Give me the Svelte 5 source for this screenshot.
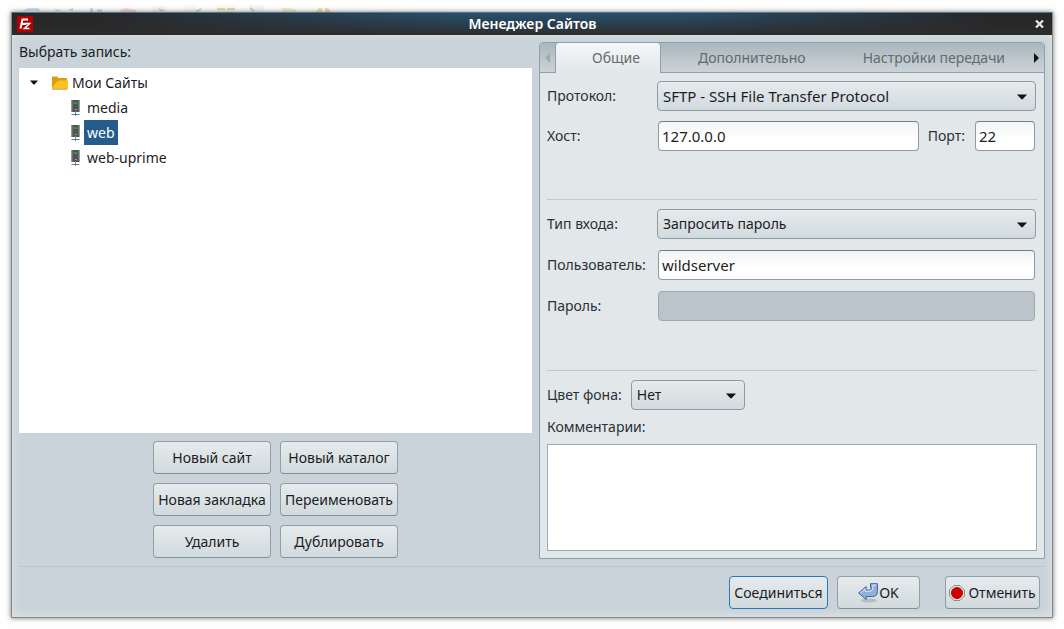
<script>
  const tabs = ['Общие', 'Дополнительно', 'Настройки передачи'];
  const sites = ['media', 'web', 'web-uprime'];
  const siteActions = ['Новый сайт', 'Новый каталог', 'Новая закладка', 'Переименовать', 'Удалить', 'Дублировать'];
  let activeTab = $state('Общие');
  let selected = $state('web');
  let host = $state('127.0.0.0');
  let port = $state('22');
  let user = $state('wildserver');
</script>

{#snippet arrow()}
  <svg class="caret" width="10" height="6" viewBox="0 0 10 6" aria-hidden="true"><path d="M0 0.5H10L5.6 5.2H4.4Z" fill="#111" /></svg>
{/snippet}

<div class="desktop">
  <svg class="behind" viewBox="0 0 340 12" width="340" height="12" aria-hidden="true">
    <path d="M24 10L28 8H38L41 11H22Z" fill="#a9cdf2" />
    <path d="M55 9L62 11H56ZM68 10L73 8V11Z" fill="#8fd08b" />
    <path d="M90 8H93V12H90ZM97 9H102V12H97Z" fill="#a9cdf2" />
    <path d="M120 10L126 8L136 10V12H121Z" fill="#f0c3c3" />
    <path d="M152 6H166V12H152Z" fill="#f2f2f2" /><path d="M158 8L166 11H160Z" fill="#e0a0a0" />
    <path d="M183 5H197V12H183Z" fill="#f6f6f6" /><path d="M195 11L201 8L202 9L198 12Z" fill="#96ce8a" />
    <path d="M217 5H235V12H217Z" fill="#f7f7f0" /><path d="M217 9H225M227 9H235" stroke="#d5c774" stroke-width="2" />
    <path d="M249 5H264V12H250Z" fill="#f2f2f2" /><path d="M250 8L254 11" stroke="#93c58c" stroke-width="2" />
    <path d="M281 8H291L296 10V12H283Z" fill="#f2e2b8" />
    <path d="M316 12L319 8H322V12ZM325 12V8H328L331 12Z" fill="#efcd70" />
  </svg>
  <main class="dialog">
    <header>
      <svg width="16" height="16" viewBox="0 0 16 16" aria-hidden="true">
        <rect width="16" height="16" fill="#b30000" />
        <path d="M3.5 12.5L5.5 3.5H11M4.5 8H9" fill="none" stroke="#fff" stroke-width="2" />
        <path d="M7.5 7.5H12.5L7.5 12.5H12.5" fill="none" stroke="#fff" stroke-width="1.6" />
      </svg>
      <h1>Менеджер Сайтов</h1>
      <button class="close" aria-label="Закрыть">
        <svg width="9" height="8" viewBox="0 0 9 8" aria-hidden="true"><path d="M1 0.5L8 7.5M8 0.5L1 7.5" stroke="#e4e4e4" stroke-width="2.3" /></svg>
      </button>
    </header>

    <div class="content">
      <div class="columns">
        <section class="left">
          <h2>Выбрать запись:</h2>
          <div class="tree" role="tree" aria-label="Сайты">
            <div class="row root" role="treeitem" aria-selected="false" aria-expanded="true">
              <svg width="8" height="5" viewBox="0 0 8 5" aria-hidden="true"><path d="M0 0.5H8L4.5 4.5H3.5Z" fill="#111" /></svg>
              <svg class="folder" width="16" height="14" viewBox="0 0 16 14" aria-hidden="true">
                <path d="M0 1Q0 0.5 0.5 0.5H5L6.5 2H14Q15 2 15 3V12H0Z" fill="#dc9f0c" />
                <path d="M0 13L1.5 9.5L5 5.8L7 4.5H16V12Q16 13 15 13Z" fill="#ffc21c" />
                <path d="M0 13.3H15.5" stroke="#ad8b39" stroke-width="0.7" />
              </svg>
              <span>Мои Сайты</span>
            </div>
            {#each sites as site}
              <div class="row site" role="treeitem" aria-selected={selected === site}>
                <svg width="9" height="16" viewBox="0 0 9 16" aria-hidden="true">
                  <rect x="0.5" y="0" width="8" height="12" fill="#505254" />
                  <path d="M1 0V12M8 0V12" stroke="#85878a" />
                  <rect x="2.5" y="2" width="4" height="2" fill="#22a235" />
                  <path d="M4 9.5H5.5" stroke="#b4b6b7" />
                  <path d="M4.5 11V16" stroke="#70879d" />
                  <path d="M0.5 14.5H8.5" stroke="#5c7a96" />
                </svg>
                <button class:selected={selected === site} onclick={() => (selected = site)}>{site}</button>
              </div>
            {/each}
          </div>
          <div class="site-actions">
            {#each siteActions as label}<button class="btn">{label}</button>{/each}
          </div>
        </section>

        <section class="notebook">
          <nav>
            <button class="scroll prev" aria-label="Назад" disabled>
              <svg width="5" height="10" viewBox="0 0 5 10" aria-hidden="true"><path d="M5 0V10L0 5Z" fill="#9dabb1" /></svg>
            </button>
            {#each tabs as tab}
              <button class="tab" class:active={activeTab === tab} onclick={() => (activeTab = tab)}>{tab}</button>
            {/each}
            <button class="scroll next" aria-label="Вперёд">
              <svg width="5" height="10" viewBox="0 0 5 10" aria-hidden="true"><path d="M0 0V10L5 5Z" fill="#111" /></svg>
            </button>
          </nav>
          <form class="page" onsubmit={(e) => e.preventDefault()}>
            <div class="group server">
              <label for="protocol">Протокол:</label>
              <div class="select latin">
                <select id="protocol"><option>SFTP - SSH File Transfer Protocol</option></select>{@render arrow()}
              </div>
              <label for="host">Хост:</label>
              <div class="host">
                <input id="host" bind:value={host} />
                <label for="port">Порт:</label>
                <input id="port" class="port" bind:value={port} />
              </div>
            </div>
            <hr />
            <div class="group login">
              <label for="logon">Тип входа:</label>
              <div class="select">
                <select id="logon"><option>Запросить пароль</option></select>{@render arrow()}
              </div>
              <label for="user">Пользователь:</label>
              <input id="user" bind:value={user} />
              <label for="password">Пароль:</label>
              <input id="password" type="password" disabled />
            </div>
            <hr />
            <div class="color">
              <label for="color">Цвет фона:</label>
              <div class="select">
                <select id="color"><option>Нет</option></select>{@render arrow()}
              </div>
            </div>
            <label class="comments-label" for="comments">Комментарии:</label>
            <textarea id="comments"></textarea>
          </form>
        </section>
      </div>

      <footer>
        <button class="btn connect">Соединиться</button>
        <button class="btn ok">
          <svg width="20" height="20" viewBox="0 0 20 20" aria-hidden="true">
            <ellipse cx="11" cy="17.5" rx="8" ry="2" fill="#a9b0b4" opacity="0.7" />
            <path d="M0.6 10L8.2 3.5V7H11.5Q13.5 7 13.5 5V4.5H12.5V0.7H19.4V8.5Q19.4 13.5 14.5 13.5H8.2V16.5Z" fill="#8fb2da" stroke="#3d659c" stroke-linejoin="round" />
            <path d="M2.3 10L7.2 5.8V8.2H12Q14.8 8 14.8 5V2H18.2" fill="none" stroke="#dbe8f6" />
          </svg>OK
        </button>
        <button class="btn cancel">
          <svg width="16" height="16" viewBox="0 0 16 16" aria-hidden="true">
            <path d="M5 0.6H11L15.4 5V11L11 15.4H5L0.6 11V5Z" fill="#eeeeec" stroke="#81837d" />
            <circle cx="8" cy="8" r="5.6" fill="#d00000" stroke="#a80000" stroke-width="0.8" />
          </svg>Отменить
        </button>
      </footer>
    </div>
  </main>
</div>

<style>
  :global(body) { margin: 0; background: #fefefe; }
  .desktop {
    box-sizing: border-box;
    min-height: 100vh;
    padding: 12px 11px 11px;
    display: flex;
    position: relative;
    font: 14px/20px "Noto Sans", sans-serif;
    color: #1b1d1f;
  }
  .behind { position: absolute; top: 0; left: 0; opacity: 0.6; }
  .dialog {
    position: relative;
    flex: 1;
    min-width: 0;
    display: flex;
    flex-direction: column;
    box-sizing: border-box;
    border: 1px solid #858789;
    border-top: 0;
    box-shadow: 0 0 5px rgba(0, 0, 0, 0.55);
    background: #cad3d9;
  }
  header {
    display: flex;
    align-items: center;
    height: 23px;
    padding: 0 8px 0 5px;
    border-top: 1px solid #5a7688;
    box-sizing: border-box;
    background: linear-gradient(rgba(46, 43, 42, 0) 0%, rgba(46, 43, 42, 0.95) 100%), linear-gradient(90deg, #252729 8%, #27506e 42%, #27506e 64%, #252729 94%);
  }
  h1 { flex: 1; margin: 0; padding-right: 3px; font-size: 14px; line-height: 20px; font-weight: 600; color: #fff; text-align: center; }
  button { font: inherit; color: inherit; margin: 0; padding: 0; border: 0; background: none; }
  .close { display: flex; padding: 0; }
  .content {
    flex: 1;
    display: flex;
    flex-direction: column;
    padding: 7px 7px 8px;
    box-shadow: inset 0 -1px 8px #dfe8e8;
  }
  .columns { flex: 1; display: grid; grid-template-columns: 513fr 506fr; gap: 7px; }
  .left { display: flex; flex-direction: column; min-width: 0; }
  h2 { margin: 0; font: inherit; line-height: 20px; height: 26px; }
  .tree { flex: 1; background: #fff; padding: 2px 11px; }
  .row { display: flex; align-items: center; height: 25px; }
  .root span { margin-left: 4px; }
  .folder { margin-left: 14px; }
  .site { padding-left: 41px; gap: 4px; }
  .site button { height: 25px; padding: 0 3px; }
  .site .selected { background: #255c8c; color: #fff; }
  .site-actions { display: grid; grid-template-columns: repeat(2, 118px); gap: 9px; justify-content: center; padding: 8px 0 1px; }
  .btn {
    display: flex;
    align-items: center;
    justify-content: center;
    box-sizing: border-box;
    height: 33px;
    border: 1px solid #8fa0a6;
    border-bottom-color: #7f9096;
    border-radius: 4px;
    background: linear-gradient(#e6ebed, #d1dadd);
    white-space: nowrap;
  }
  .notebook {
    display: flex;
    flex-direction: column;
    min-width: 0;
    border: 1px solid #8ea1aa;
    border-radius: 4px 4px 0 0;
    background: #e2e7ea;
  }
  nav {
    display: flex;
    height: 30px;
    box-sizing: border-box;
    background: linear-gradient(#aab7be, #ccd4d8);
    box-shadow: inset 0 -1px #8ea1aa;
    border-radius: 3px 3px 0 0;
    color: #646a6d;
  }
  .tab { padding: 0 20px 0 37px; white-space: nowrap; }
  .tab.active {
    padding-left: 36px;
    border: solid #8ea1aa;
    border-width: 0 1px;
    border-radius: 4px 4px 0 0;
    background: linear-gradient(#f5f7f8, #e2e7ea);
  }
  .scroll { display: flex; align-items: center; justify-content: center; width: 15px; flex: none; }
  .next { margin-left: auto; }
  .page { flex: 1; display: flex; flex-direction: column; padding: 8px 7px 7px; }
  label { color: #2a3034; line-height: 30px; white-space: nowrap; }
  .group { display: grid; grid-template-columns: 110px 1fr; grid-auto-rows: 30px; }
  .server { row-gap: 10px; padding-bottom: 48px; }
  .login { row-gap: 11px; padding: 9px 0 49px; }
  hr { width: 100%; height: 1px; margin: 0; border: 0; background: #bfc8cc; }
  .select { position: relative; display: flex; margin-right: 1px; }
  .latin { font-size: 15px; }
  select {
    appearance: none;
    flex: 1;
    min-width: 0;
    height: 30px;
    box-sizing: border-box;
    padding: 0 28px 0 5px;
    border: 1px solid #8c9ca4;
    border-radius: 4px;
    background: linear-gradient(#e6ebed, #d1dadd);
    font: inherit;
    color: inherit;
  }
  .caret { position: absolute; right: 9px; top: 13px; pointer-events: none; }
  input {
    box-sizing: border-box;
    min-width: 0;
    height: 30px;
    margin: 0 2px 0 1px;
    padding: 0 3px;
    border: 1px solid #8c9ba1;
    border-top-color: #747f86;
    border-radius: 4px;
    background: linear-gradient(#f2f3f3, #fff 60%);
    font: inherit;
    font-size: 15px;
    color: inherit;
  }
  input:disabled { background: #bac4ca; border-color: #9aa9b0; }
  .host { display: flex; gap: 8px; }
  .host input { flex: 1; margin-right: 1px; }
  .host .port { flex: 0 0 60px; margin: 0 2px; }
  .color { display: flex; gap: 9px; padding-top: 9px; }
  .color .select { width: 114px; }
  .comments-label { line-height: 34px; }
  textarea {
    flex: 1;
    box-sizing: border-box;
    width: 100%;
    min-height: 80px;
    border: 1px solid #9baab0;
    background: #fff;
    font: inherit;
    resize: none;
  }
  footer { display: flex; justify-content: flex-end; gap: 9px; margin-top: 7px; padding: 9px 5px 0 0; border-top: 1px solid #bdc7cb; }
  .connect { width: 99px; border-color: #2a78b8; }
  .ok { width: 83px; gap: 1px; }
  .cancel { width: 95px; margin-left: 16px; gap: 3px; }
</style>
